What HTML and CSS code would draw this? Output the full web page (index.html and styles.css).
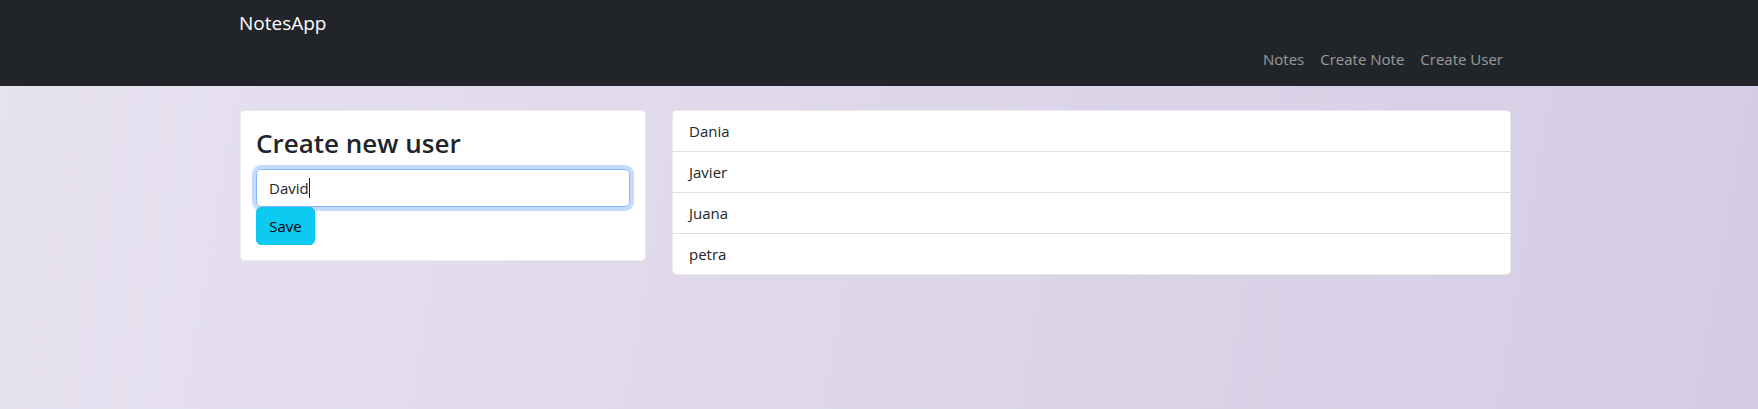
FILE: index.html
```html
<!DOCTYPE html>
<html lang="en">
<head>
<meta charset="utf-8">
<title>NotesApp</title>
<link rel="stylesheet" href="styles.css">
</head>
<body>
<nav class="navbar">
  <div class="container nav-inner">
    <a class="brand" href="#">NotesApp</a>
    <ul class="nav-links">
      <li><a href="#">Notes</a></li>
      <li><a href="#">Create Note</a></li>
      <li><a href="#">Create User</a></li>
    </ul>
  </div>
</nav>
<main class="container content">
  <section class="card">
    <h3 class="card-title">Create new user</h3>
    <div class="field"><span>David</span><span class="caret"></span></div>
    <button class="btn-save" type="button">Save</button>
  </section>
  <ul class="list">
    <li>Dania</li>
    <li>Javier</li>
    <li>Juana</li>
    <li>petra</li>
  </ul>
</main>
</body>
</html>
```

FILE: styles.css
```css
* { box-sizing: border-box; }
html, body { height: 100%; }
body {
  margin: 0;
  font-family: "Open Sans", "Noto Sans", sans-serif;
  font-size: 16px;
  line-height: 1.5;
  color: #212529;
  background: linear-gradient(100deg, #e7e2f0 0%, #d4cce4 100%);
}
.container {
  width: 1271px;
  margin-left: 240px;
}
.navbar {
  background: #212529;
  height: 86px;
}
.nav-inner {
  display: flex;
  flex-direction: column;
  padding-top: 8px;
}
.brand {
  color: #fff;
  text-decoration: none;
  font-size: 19px;
  line-height: 30px;
  align-self: flex-start;
  margin-left: -1px;
}
.nav-links {
  list-style: none;
  margin: 6px 0 0;
  padding: 0;
  display: flex;
  justify-content: flex-end;
}
.nav-links a {
  display: block;
  padding: 4px 8px;
  color: rgba(255, 255, 255, 0.55);
  text-decoration: none;
  font-size: 15px;
}
.content {
  display: flex;
  align-items: flex-start;
  gap: 26px;
  padding-top: 24px;
}
.card {
  width: 406px;
  background: #fff;
  border: 1px solid rgba(0, 0, 0, 0.08);
  border-radius: 5px;
  padding: 15px;
}
.card-title {
  margin: 0 0 9px;
  font-size: 26px;
  font-weight: 600;
  line-height: 34px;
}
.field {
  height: 38px;
  border: 1px solid #86b7fe;
  border-radius: 5px;
  box-shadow: 0 0 0 4px rgba(13, 110, 253, 0.25);
  padding: 6px 12px;
  display: flex;
  align-items: center;
  font-size: 15px;
}
.caret {
  width: 1px;
  height: 20px;
  background: #212529;
}
.btn-save {
  display: block;
  height: 38px;
  width: 59px;
  border: 1px solid #0dcaf0;
  background: #0dcaf0;
  color: #000;
  border-radius: 5px;
  font-family: inherit;
  font-size: 15px;
  padding: 0;
}
.list {
  width: 839px;
  list-style: none;
  margin: 0;
  padding: 0;
  background: #fff;
  border: 1px solid rgba(0, 0, 0, 0.08);
  border-radius: 5px;
}
.list li {
  padding: 8px 16px;
  line-height: 24px;
  font-size: 15px;
  border-top: 1px solid rgba(0, 0, 0, 0.125);
}
.list li:first-child { border-top: 0; }
```
